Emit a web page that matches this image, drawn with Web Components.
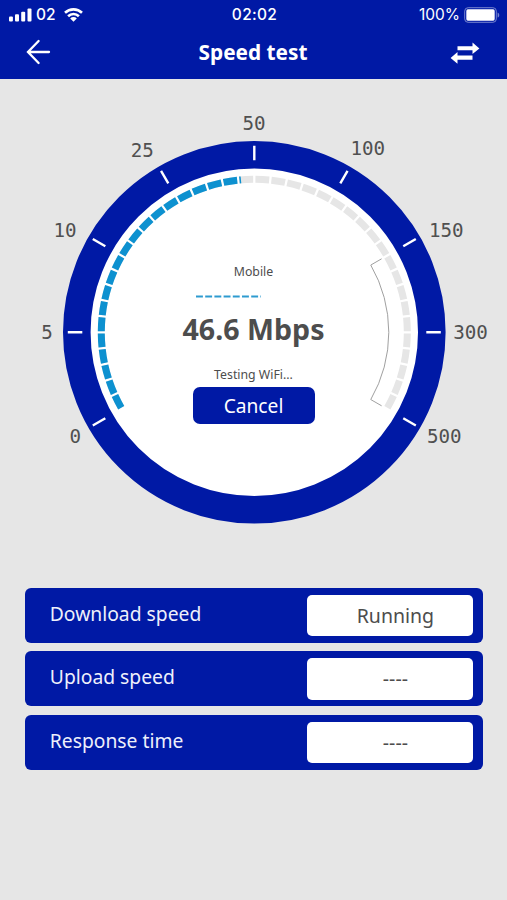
<!DOCTYPE html>
<html lang="en">
<head>
<meta charset="utf-8">
<meta name="viewport" content="width=device-width, initial-scale=1">
<title>Speed test</title>
<style>
    :root {
        --blue: #0019a5;
        --cyan: #0d91d0;
        --page: #e6e6e6;
        --ink: #4d4d4d;
    }
    body {
        margin: 0;
        background: var(--page);
        color: var(--ink);
        font-family: "Noto Sans", sans-serif;
    }
</style>
</head>
<body>
<speed-app>
    <status-bar slot="top" carrier="02" time="02:02" battery="100%"></status-bar>
    <nav-bar slot="top">Speed test</nav-bar>
    <speed-gauge progress="115">
        <speed-readout network="Mobile" value="46.6 Mbps" status="Testing WiFi...">Cancel</speed-readout>
    </speed-gauge>
    <result-list>
        <result-row label="Download speed">Running</result-row>
        <result-row label="Upload speed">----</result-row>
        <result-row label="Response time">----</result-row>
    </result-list>
</speed-app>

<script>
class SpeedApp extends HTMLElement {
    constructor() {
        super();
        this.attachShadow({ mode: "open" });
        this.shadowRoot.innerHTML = `
            <style>
                :host {
                    display: flex;
                    flex-direction: column;
                    width: 507px;
                    height: 900px;
                    overflow: hidden;
                    background: var(--page);
                }
                header {
                    height: 79px;
                    flex: none;
                    background: var(--blue);
                    color: #fff;
                }
            </style>
            <header><slot name="top"></slot></header>
            <slot></slot>
        `;
    }
}

class StatusBar extends HTMLElement {
    constructor() {
        super();
        this.attachShadow({ mode: "open" });
        this.shadowRoot.innerHTML = `
            <style>
                :host {
                    display: grid;
                    grid-template-columns: 1fr auto 1fr;
                    align-items: center;
                    height: 30px;
                    padding: 0 7px 0 9px;
                    font: 500 15.5px/30px Inter, sans-serif;
                }
                .side { display: flex; align-items: center; }
                .right { justify-content: flex-end; font-weight: 400; }
                .time { letter-spacing: 0.3px; }
                svg { display: block; }
                .carrier { margin: 0 8px 0 4px; }
                .battery { margin-left: 4px; }
            </style>
            <div class="side">
                <svg width="23" height="14" viewBox="0 0 23 14" fill="#fff">
                    <rect x="0" y="8.5" width="3.9" height="5" rx="1"/>
                    <rect x="6" y="6.3" width="4" height="7.2" rx="1"/>
                    <rect x="12.2" y="3.7" width="4" height="9.8" rx="1"/>
                    <rect x="18.5" y="0.6" width="4" height="12.9" rx="1"/>
                </svg>
                <span class="carrier">${this.getAttribute("carrier")}</span>
                <svg width="19" height="14" viewBox="0 0 19 14" fill="none" stroke="#fff" stroke-width="2.6">
                    <path d="M1 4.8a12.2 12.2 0 0 1 17 0"/>
                    <path d="M4.1 8.2a7.7 7.7 0 0 1 10.8 0"/>
                    <path d="M9.5 13.8 6.2 10.4a4.6 4.6 0 0 1 6.6 0z" fill="#fff" stroke="none"/>
                </svg>
            </div>
            <span class="time">${this.getAttribute("time")}</span>
            <div class="side right">
                <span>${this.getAttribute("battery")}</span>
                <svg class="battery" width="36" height="16" viewBox="0 0 36 16">
                    <rect x="0.7" y="0.7" width="31.6" height="14.6" rx="3.4" fill="none" stroke="#7583cf" stroke-width="1"/>
                    <rect x="2.3" y="2.3" width="28.4" height="11.4" rx="1.6" fill="#fff"/>
                    <path d="M33.6 5.4c2.2.8 2.2 4.4 0 5.2z" fill="#7583cf"/>
                </svg>
            </div>
        `;
    }
}

class NavBar extends HTMLElement {
    constructor() {
        super();
        this.attachShadow({ mode: "open" });
        this.shadowRoot.innerHTML = `
            <style>
                :host {
                    display: grid;
                    grid-template-columns: 1fr auto 1fr;
                    align-items: center;
                    height: 44px;
                    padding: 0 27px 0 26px;
                    font-weight: 700;
                    font-size: 20.8px;
                    line-height: 44px;
                }
                svg { display: block; }
                .swap { justify-self: end; margin-top: 2px; }
            </style>
            <svg width="25" height="26" viewBox="0 0 25 26" fill="none" stroke="#fff" stroke-width="2.3" stroke-linecap="round">
                <path d="M12.6 2 2 13l10.6 11M2 13h21"/>
            </svg>
            <slot></slot>
            <svg class="swap" width="30" height="22" viewBox="0 0 30 22" fill="#fff">
                <path d="M7.5 4.2h15V.6L29.4 6.5 22.5 12.1V8.2h-15z"/>
                <path d="M22.5 13.6h-15V10L.6 15.9l6.9 5.9v-4h15z"/>
            </svg>
        `;
    }
}

const CX = 254.3;
const CY = 253.3;
const LABELS = [
    // text, angle (clockwise from the top), x, baseline
    ["0", -120, 75.2, 363.5],
    ["5", -90, 47, 259.5],
    ["10", -60, 65, 157.5],
    ["25", -30, 142.3, 77.7],
    ["50", 0, 254, 50.5],
    ["100", 30, 367.8, 76],
    ["150", 60, 446.3, 157.5],
    ["300", 90, 470.5, 259.5],
    ["500", 120, 444.3, 363.5],
];

function point(radius, deg) {
    const a = deg * Math.PI / 180;
    return `${(CX + radius * Math.sin(a)).toFixed(2)} ${(CY - radius * Math.cos(a)).toFixed(2)}`;
}

function arc(radius, from, to) {
    const large = to - from > 180 ? 1 : 0;
    return `M${point(radius, from)}A${radius} ${radius} 0 ${large} 1 ${point(radius, to)}`;
}

// 6 degree segments with a small gap on each side
function segments(from, to) {
    let d = "";
    for (let a = from; a < to; a += 6) {
        d += arc(153, a + 0.42, Math.min(a + 5.58, to));
    }
    return d;
}

class SpeedGauge extends HTMLElement {
    constructor() {
        super();
        this.attachShadow({ mode: "open" });
        const end = -120 + Number(this.getAttribute("progress"));
        const ticks = LABELS.map(([, deg]) => `M${point(172, deg)}L${point(186.5, deg)}`).join("");
        const texts = LABELS.map(([text, , x, y]) => `<text x="${x}" y="${y}">${text}</text>`).join("");
        this.shadowRoot.innerHTML = `
            <style>
                :host {
                    display: grid;
                    flex: none;
                    height: 509px;
                }
                svg, .center { grid-area: 1 / 1; }
                .center { display: flex; justify-content: center; }
                text {
                    font: 19.2px "DejaVu Sans Mono", monospace;
                    fill: #505050;
                    text-anchor: middle;
                }
            </style>
            <svg width="507" height="509" viewBox="0 0 507 509" fill="none">
                <circle cx="${CX}" cy="${CY}" r="177.5" fill="#fff" stroke="var(--blue)" stroke-width="27.6"/>
                <path d="${ticks}" stroke="#fff" stroke-width="2.4"/>
                <path d="${segments(-120, 120)}" stroke="#e6e6e6" stroke-width="7"/>
                <path d="${segments(-120, end)}" stroke="var(--cyan)" stroke-width="7"/>
                <path d="M${point(147, 60)}L${point(134.5, 60)}A134.5 134.5 0 0 1 ${point(134.5, 120)}L${point(147, 120)}" stroke="#a0a0a0" stroke-width="1"/>
                ${texts}
            </svg>
            <div class="center"><slot></slot></div>
        `;
    }
}

class SpeedReadout extends HTMLElement {
    constructor() {
        super();
        this.attachShadow({ mode: "open" });
        this.shadowRoot.innerHTML = `
            <style>
                :host {
                    display: flex;
                    flex-direction: column;
                    align-items: center;
                    width: 160px;
                    padding-top: 184px;
                }
                .small { font-size: 12.3px; line-height: 18px; }
                svg { display: block; margin: 14px 50px 0 0; }
                .value {
                    margin-top: 11px;
                    font-weight: 700;
                    font-size: 28.6px;
                    line-height: 40px;
                    white-space: nowrap;
                }
                .status { margin-top: 17px; }
                button {
                    width: 122px;
                    height: 37px;
                    margin-top: 3px;
                    padding: 0;
                    border: 0;
                    border-radius: 7px;
                    background: var(--blue);
                    color: #fff;
                    font: 19.2px/37px "Noto Sans", sans-serif;
                }
            </style>
            <div class="small">${this.getAttribute("network")}</div>
            <svg width="65" height="3" viewBox="0 0 65 3">
                <path d="M0 1.5h65" stroke="#2e9bd0" stroke-width="1.9" stroke-dasharray="6.9 2.3"/>
            </svg>
            <div class="value">${this.getAttribute("value")}</div>
            <div class="small status">${this.getAttribute("status")}</div>
            <button><slot></slot></button>
        `;
    }
}

class ResultList extends HTMLElement {
    constructor() {
        super();
        this.attachShadow({ mode: "open" });
        this.shadowRoot.innerHTML = `
            <style>
                :host {
                    display: flex;
                    flex-direction: column;
                    gap: 8.7px;
                    padding: 0 24.3px 0 25.3px;
                }
            </style>
            <slot></slot>
        `;
    }
}

class ResultRow extends HTMLElement {
    constructor() {
        super();
        this.attachShadow({ mode: "open" });
        this.shadowRoot.innerHTML = `
            <style>
                :host {
                    display: flex;
                    justify-content: space-between;
                    box-sizing: border-box;
                    height: 54.8px;
                    padding: 6.8px 9.5px 0 24.5px;
                    border-radius: 6px;
                    background: var(--blue);
                    font-size: 19.5px;
                }
                .label {
                    color: #eef0fb;
                    font-size: 19.3px;
                    line-height: 37.5px;
                }
                .value {
                    box-sizing: border-box;
                    width: 166.6px;
                    height: 41.5px;
                    padding-left: 11px;
                    border-radius: 5px;
                    background: #fff;
                    line-height: 42px;
                    text-align: center;
                }
            </style>
            <div class="label">${this.getAttribute("label")}</div>
            <div class="value"><slot></slot></div>
        `;
    }
}

customElements.define("speed-app", SpeedApp);
customElements.define("status-bar", StatusBar);
customElements.define("nav-bar", NavBar);
customElements.define("speed-gauge", SpeedGauge);
customElements.define("speed-readout", SpeedReadout);
customElements.define("result-list", ResultList);
customElements.define("result-row", ResultRow);
</script>
</body>
</html>
